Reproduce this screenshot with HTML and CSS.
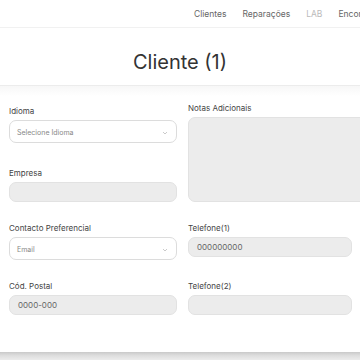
FILE: index.html
```html
<!DOCTYPE html>
<html lang="pt">
<head>
  <meta charset="UTF-8">
  <meta name="viewport" content="width=device-width, initial-scale=1.0">
  <title>Cliente</title>
  <link rel="stylesheet" href="styles.css">
</head>
<body>
  <nav class="topnav">
    <a href="#">Clientes</a>
    <a href="#">Reparações</a>
    <a href="#" class="muted">LAB</a>
    <a href="#">Encomendas</a>
  </nav>
  <h1 class="title">Cliente (1)</h1>
  <div class="divider"></div>
  <form class="form">
    <div class="col left">
      <div class="field">
        <label>Idioma</label>
        <div class="select">
          <span>Selecione Idioma</span>
          <svg width="6" height="4" viewBox="0 0 6 4"><path d="M1 1l2 2 2-2" fill="none" stroke="#c4c4c4" stroke-width="0.9"/></svg>
        </div>
      </div>
      <div class="field">
        <label>Empresa</label>
        <div class="input"></div>
      </div>
    </div>
    <div class="col">
      <div class="field">
        <label>Notas Adicionais</label>
        <div class="textarea"></div>
      </div>
    </div>
    <div class="field">
      <label>Contacto Preferencial</label>
      <div class="select">
        <span>Email</span>
        <svg width="6" height="4" viewBox="0 0 6 4"><path d="M1 1l2 2 2-2" fill="none" stroke="#c4c4c4" stroke-width="0.9"/></svg>
      </div>
    </div>
    <div class="field">
      <label>Telefone(1)</label>
      <div class="input">000000000</div>
    </div>
    <div class="field">
      <label>Cód. Postal</label>
      <div class="input">0000-000</div>
    </div>
    <div class="field">
      <label>Telefone(2)</label>
      <div class="input"></div>
    </div>
  </form>
  <footer class="bottombar"></footer>
</body>
</html>
```

FILE: styles.css
```css
body {
  font-family: Inter, 'Noto Sans', sans-serif;
  margin: 0;
  width: 360px;
  height: 360px;
  overflow: hidden;
  background: #fff;
  color: #333;
  position: relative;
}
.topnav {
  height: 27px;
  border-bottom: 1px solid #f1f1f1;
  display: flex;
  align-items: center;
  gap: 16px;
  padding-left: 194px;
  white-space: nowrap;
  overflow: hidden;
}
.topnav a {
  font-size: 8.5px;
  color: #666;
  text-decoration: none;
}
.topnav a.muted {
  color: #bbb;
}
.title {
  margin: 0;
  padding-top: 22px;
  height: 35px;
  text-align: center;
  font-size: 20px;
  font-weight: 400;
  color: #333;
  line-height: 24px;
}
.divider {
  height: 10px;
  border-top: 1px solid #ececec;
  background: linear-gradient(#f7f7f7, #fff);
}
.form {
  display: grid;
  grid-template-columns: 168px 164px;
  column-gap: 11px;
  row-gap: 21px;
  padding: 7px 8px 0 9px;
}
.col {
  display: flex;
  flex-direction: column;
  gap: 24px;
}
.col.left {
  padding-top: 3px;
}
.field label {
  display: block;
  font-size: 8px;
  line-height: 10px;
  color: #444;
  margin-bottom: 4px;
}
.select {
  height: 19px;
  border: 1px solid #dcdcdc;
  border-radius: 7px;
  background: #fff;
  display: flex;
  align-items: center;
  justify-content: space-between;
  padding: 2px 8px 0 7px;
  font-size: 7px;
  color: #888;
}
.input {
  height: 18px;
  border: 1px solid #e2e2e2;
  border-radius: 7px;
  background: #ececec;
  display: flex;
  align-items: center;
  padding: 0 8px;
  font-size: 8px;
  color: #666;
}
.left .select {
  margin-bottom: 1px;
}
.textarea {
  height: 83px;
  width: 180px;
  border: 1px solid #e2e2e2;
  border-radius: 7px;
  background: #ececec;
}
.bottombar {
  position: absolute;
  left: 0;
  right: 0;
  top: 352px;
  height: 8px;
  background: linear-gradient(#c9c9c9, #dcdcdc 40%, #ececec);
}
```
